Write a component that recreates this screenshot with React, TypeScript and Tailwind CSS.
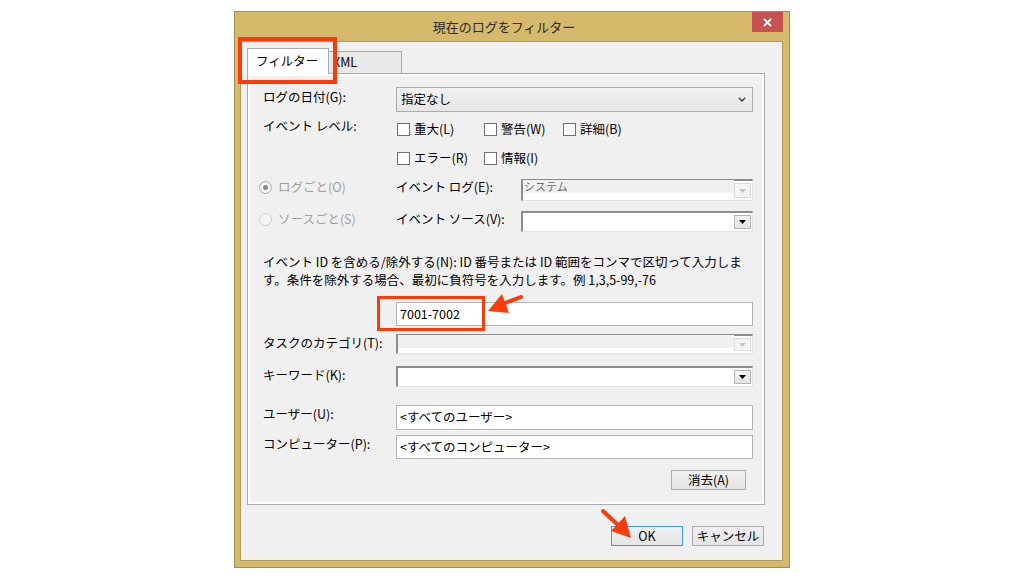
import React from 'react';

const jp = "font-['Noto_Sans_CJK_JP','Noto_Sans',sans-serif]";

const DownTriangle = ({ color }: { color: string }) => (
  <svg width="7" height="4" viewBox="0 0 7 4">
    <polygon points="0,0 7,0 3.5,4" fill={color} />
  </svg>
);

const Checkbox = ({ label, className }: { label: string; className?: string }) => (
  <div className={`flex items-center gap-[4px] h-[20px] ${className ?? ''}`}>
    <span className="w-[13px] h-[13px] border border-[#707070] bg-white shrink-0" />
    <span className="leading-[18px]">{label}</span>
  </div>
);

const Radio = ({ label, checked }: { label: string; checked?: boolean }) => (
  <div className="flex items-center gap-[6px] h-[18px] text-[#a0a0a0]">
    <span
      className={`w-[13px] h-[13px] rounded-full border bg-[#f4f4f4] flex items-center justify-center shrink-0 ${
        checked ? 'border-[#a8a8a8]' : 'border-[#d0d0d0]'
      }`}
    >
      {checked && <span className="w-[5px] h-[5px] rounded-full bg-[#8a8a8a]" />}
    </span>
    <span>{label}</span>
  </div>
);

// sunken classic combobox with drop button
const Combo = ({ disabled, text, className }: { disabled?: boolean; text?: string; className: string }) => (
  <div
    className={`flex border-t-2 border-l-2 border-[#8c8c8c] border-b border-r border-b-[#e3e3e3] border-r-[#e3e3e3] ${className}`}
  >
    {disabled ? (
      <div className="flex-1 flex flex-col">
        <div className="h-[13px] bg-[#f0f0f0] text-[11px] leading-[13px] text-[#6d6d6d] pl-[1px] -mt-[1px]">
          {text}
        </div>
        <div className="flex-1 bg-white" />
      </div>
    ) : (
      <div className="flex-1 bg-white" />
    )}
    <div className="flex items-stretch py-[2px] pr-[1px] bg-white">
      <div
        className={`w-[17px] flex items-center justify-center border ${
          disabled ? 'border-[#dcdcdc] bg-[#f4f4f4]' : 'border-[#b5b5b5] bg-gradient-to-b from-[#f4f4f4] to-[#e4e4e4]'
        }`}
      >
        <DownTriangle color={disabled ? '#c4c4c4' : '#000000'} />
      </div>
    </div>
  </div>
);

const Button = ({ label, def, className }: { label: string; def?: boolean; className: string }) => (
  <div
    className={`h-[20px] flex items-center justify-center border bg-gradient-to-b from-[#f0f0f0] to-[#e5e5e5] leading-none ${
      def ? 'border-[#3399ff]' : 'border-[#acacac]'
    } ${className}`}
  >
    {label}
  </div>
);

const TextBox = ({ value, className }: { value: string; className: string }) => (
  <div className={`border border-[#b4b4b4] bg-white flex items-center pl-[3px] ${className}`}>{value}</div>
);

export default function App() {
  return (
    <div className={`w-[1024px] h-[576px] bg-white relative overflow-hidden text-[12.5px] text-black ${jp}`}>
      <div className="flex justify-center pt-[11px]">
        {/* window */}
        <div className="w-[556px] h-[557px] border border-[#a38c4f] bg-[#d6b96b] flex flex-col pl-[5px] pr-[6px] pb-[6px]">
          <div className="h-[29px] relative flex items-center justify-center pr-[15px]">
            <span className="text-[13px] text-[#2b2b2b]">現在のログをフィルター</span>
            <div className="absolute right-0 top-0 w-[31px] h-[20px] bg-[#c75050] flex items-center justify-center">
              <svg width="9" height="9" viewBox="0 0 9 9">
                <path d="M1 1 L8 8 M8 1 L1 8" stroke="#ffffff" strokeWidth="1.8" />
              </svg>
            </div>
          </div>

          {/* client */}
          <div className="flex-1 bg-[#f0f0f0] border border-[#b09a5a] pl-[6px] pt-[6px]">
            <div className="flex items-end h-[25px]">
              <div className="w-[82px] h-[26px] -mb-[1px] bg-white border border-b-0 border-[#acacac] relative z-10 flex items-center pl-[8px] pb-[1px]">
                フィルター
              </div>
              <div className="w-[74px] h-[22px] -ml-[1px] bg-[#e9e9e9] border border-b-0 border-[#acacac] flex items-center pl-[4px]">
                XML
              </div>
            </div>

            {/* tab panel */}
            <div className="w-[518px] h-[432px] border border-[#acacac] bg-white p-[2px]">
              <div className="h-full bg-[#f0f0f0] pl-[13px] pr-[9px] pt-[11px] flex flex-col">
                {/* log date */}
                <div className="flex items-start">
                  <div className="w-[133px] leading-[18px] mt-[1px]">ログの日付(G):</div>
                  <div className="w-[357px] h-[25px] border border-[#acacac] bg-gradient-to-b from-[#f2f2f2] to-[#e6e6e6] flex items-center justify-between pl-[4px] pr-[6px]">
                    <span>指定なし</span>
                    <svg width="8" height="5" viewBox="0 0 8 5">
                      <path d="M0.8 0.8 L4 4 L7.2 0.8" stroke="#444444" strokeWidth="1.5" fill="none" />
                    </svg>
                  </div>
                </div>

                {/* event level */}
                <div className="flex items-start mt-[5px]">
                  <div className="w-[133px] leading-[18px]">イベント レベル:</div>
                  <div className="flex flex-col gap-[9px] mt-[2px] pl-[1px]">
                    <div className="flex">
                      <Checkbox label="重大(L)" className="w-[87px]" />
                      <Checkbox label="警告(W)" className="w-[79px]" />
                      <Checkbox label="詳細(B)" />
                    </div>
                    <div className="flex">
                      <Checkbox label="エラー(R)" className="w-[87px]" />
                      <Checkbox label="情報(I)" />
                    </div>
                  </div>
                </div>

                {/* by log */}
                <div className="flex items-start mt-[11px]">
                  <div className="w-[137px] -ml-[4px] -mt-[1px]">
                    <Radio label="ログごと(O)" checked />
                  </div>
                  <div className="w-[125px] leading-[18px] -mt-[1px]">イベント ログ(E):</div>
                  <Combo disabled text="システム" className="w-[232px] h-[22px]" />
                </div>

                {/* by source */}
                <div className="flex items-start mt-[10px]">
                  <div className="w-[137px] -ml-[4px] -mt-[1px]">
                    <Radio label="ソースごと(S)" />
                  </div>
                  <div className="w-[125px] leading-[18px] -mt-[1px]">イベント ソース(V):</div>
                  <Combo className="w-[232px] h-[21px]" />
                </div>

                {/* description */}
                <div className="mt-[21px] leading-[18px] whitespace-nowrap">
                  <div>イベント ID を含める/除外する(N): ID 番号または ID 範囲をコンマで区切って入力しま</div>
                  <div>す。条件を除外する場合、最初に負符号を入力します。例 1,3,5-99,-76</div>
                </div>

                <div className="flex mt-[13px]">
                  <div className="w-[133px]" />
                  <TextBox value="7001-7002" className="w-[357px] h-[24px]" />
                </div>

                <div className="flex items-start mt-[8px]">
                  <div className="w-[133px] leading-[18px]">タスクのカテゴリ(T):</div>
                  <Combo disabled className="w-[357px] h-[20px]" />
                </div>

                <div className="flex items-start mt-[12px]">
                  <div className="w-[133px] leading-[18px]">キーワード(K):</div>
                  <Combo className="w-[357px] h-[21px]" />
                </div>

                <div className="flex items-start mt-[18px]">
                  <div className="w-[133px] leading-[18px]">ユーザー(U):</div>
                  <TextBox value="<すべてのユーザー>" className="w-[357px] h-[25px]" />
                </div>

                <div className="flex items-start mt-[5px]">
                  <div className="w-[133px] leading-[18px]">コンピューター(P):</div>
                  <TextBox value="<すべてのコンピューター>" className="w-[357px] h-[24px]" />
                </div>

                <div className="flex justify-end mt-[11px] pr-[7px]">
                  <Button label="消去(A)" className="w-[75px]" />
                </div>
              </div>
            </div>

            <div className="w-[518px] flex justify-end gap-[9px] pr-[1px] mt-[21px]">
              <Button label="OK" def className="w-[72px]" />
              <Button label="キャンセル" className="w-[72px]" />
            </div>
          </div>
        </div>
      </div>

      {/* annotation overlays */}
      <div className="absolute left-[238px] top-[37px] w-[99px] h-[47px] border-4 border-[#fa3c0c] pointer-events-none" />
      <div className="absolute left-[377px] top-[296px] w-[108px] h-[35px] border-[3px] border-[#fa3c0c] pointer-events-none" />
      <svg className="absolute left-0 top-0 pointer-events-none" width="1024" height="576" viewBox="0 0 1024 576">
        <line x1="521" y1="297" x2="500" y2="305" stroke="#fa3c0c" strokeWidth="4" strokeLinecap="round" />
        <polygon points="488,311 502,294 509,313" fill="#fa3c0c" />
        <line x1="603" y1="511" x2="618" y2="525" stroke="#fa3c0c" strokeWidth="4" strokeLinecap="round" />
        <polygon points="631,538 611,531 625,516" fill="#fa3c0c" />
      </svg>
    </div>
  );
}
